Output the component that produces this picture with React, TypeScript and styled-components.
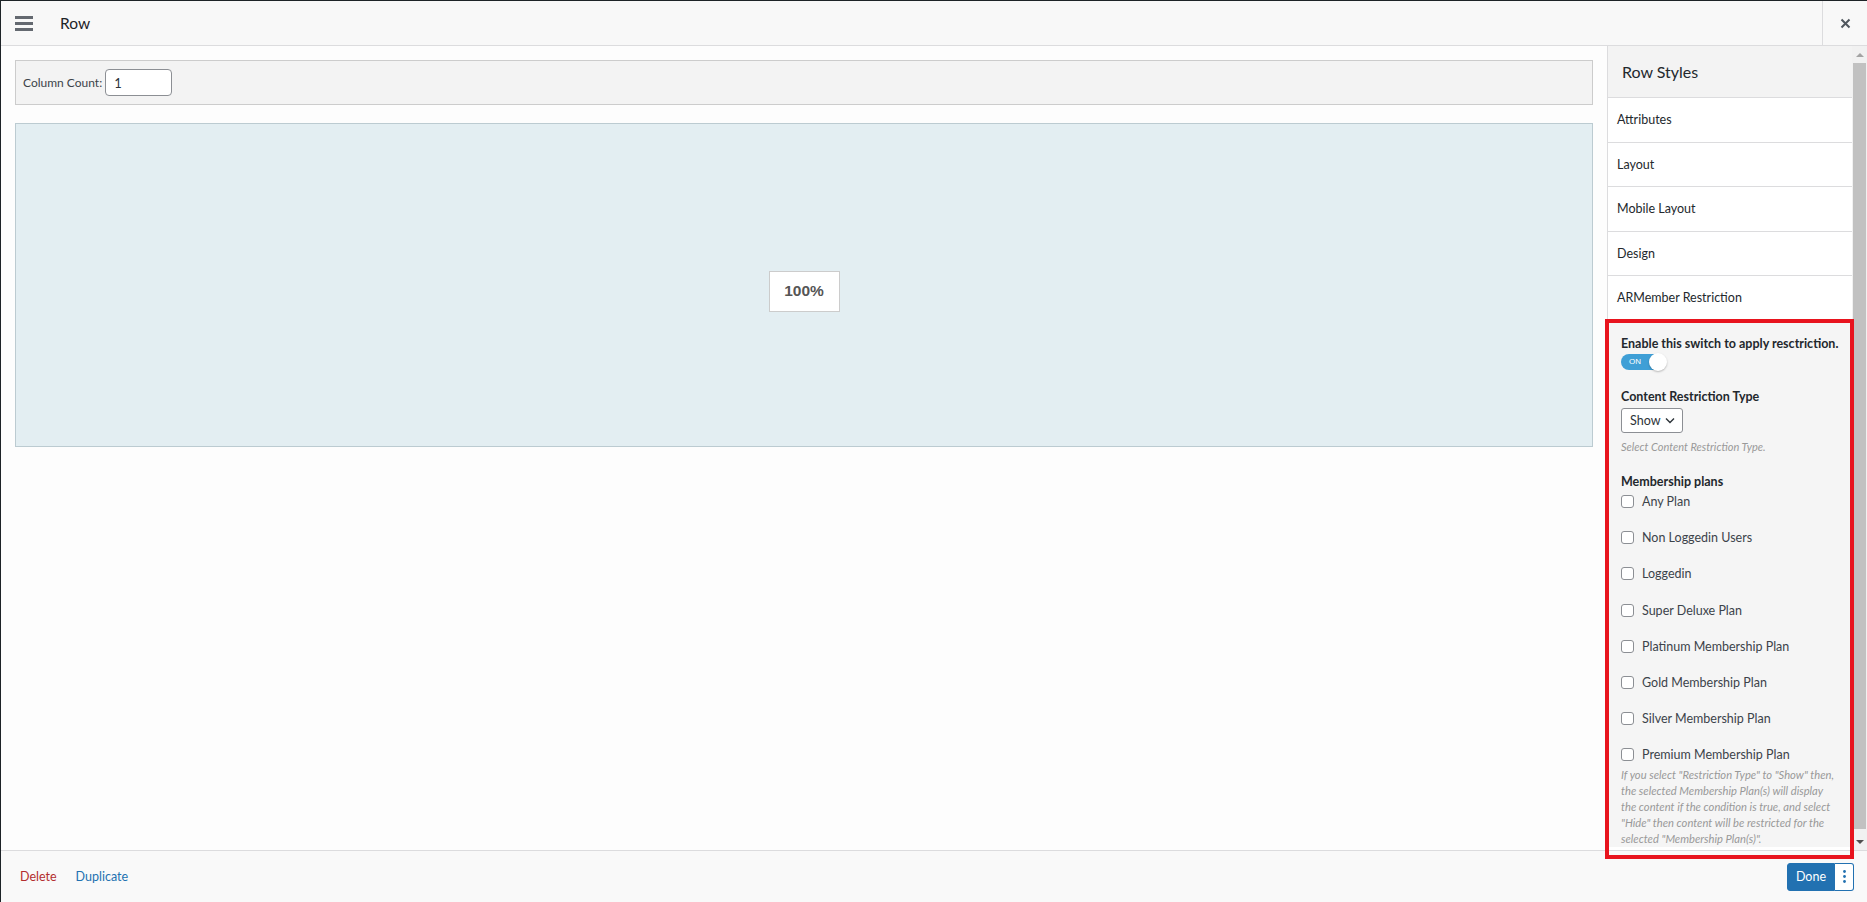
import styled, { createGlobalStyle } from "styled-components";

const GlobalStyle = createGlobalStyle`
  html, body {
    margin: 0;
    padding: 0;
    height: 100%;
    overflow: hidden;
    background: #fdfdfd;
  }
  #root {
    height: 100%;
  }
  * {
    box-sizing: border-box;
  }
`;

const PLANS = [
  "Any Plan",
  "Non Loggedin Users",
  "Loggedin",
  "Super Deluxe Plan",
  "Platinum Membership Plan",
  "Gold Membership Plan",
  "Silver Membership Plan",
  "Premium Membership Plan",
];

const TABS = ["Attributes", "Layout", "Mobile Layout", "Design", "ARMember Restriction"];

export default function App() {
  return (
    <Frame>
      <GlobalStyle />
      <Header>
        <MenuButton aria-label="menu">
          <span />
          <span />
          <span />
        </MenuButton>
        <Title>Row</Title>
        <CloseButton aria-label="close">
          <svg width="11" height="11" viewBox="0 0 11 11">
            <path d="M1.5 1.5 L9.5 9.5 M9.5 1.5 L1.5 9.5" stroke="#50575e" strokeWidth="2" />
          </svg>
        </CloseButton>
      </Header>

      <Body>
        <Main>
          <ColumnBar>
            <ColumnLabel>Column Count:</ColumnLabel>
            <CountInput defaultValue="1" />
          </ColumnBar>
          <Canvas>
            <ColumnChip>100%</ColumnChip>
          </Canvas>
        </Main>

        <Sidebar>
          <SideScroll>
            <SideHeader>Row Styles</SideHeader>
            {TABS.map((t) => (
              <TabItem key={t}>{t}</TabItem>
            ))}
            <Restriction>
              <FieldLabel>Enable this switch to apply resctriction.</FieldLabel>
              <Toggle>
                <ToggleText>ON</ToggleText>
                <Knob />
              </Toggle>

              <FieldLabel $gap={19}>Content Restriction Type</FieldLabel>
              <SelectBox>
                Show
                <svg width="10" height="7" viewBox="0 0 10 7">
                  <path d="M1 1.5 L5 5.5 L9 1.5" stroke="#2c3338" strokeWidth="1.4" fill="none" />
                </svg>
              </SelectBox>
              <Hint>Select Content Restriction Type.</Hint>

              <FieldLabel $gap={20}>Membership plans</FieldLabel>
              <PlanList>
                {PLANS.map((p) => (
                  <PlanRow key={p}>
                    <Check />
                    <span>{p}</span>
                  </PlanRow>
                ))}
              </PlanList>
              <HelpText>
                If you select "Restriction Type" to "Show" then, the selected Membership Plan(s) will
                display the content if the condition is true, and select "Hide" then content will be
                restricted for the selected "Membership Plan(s)".
              </HelpText>
            </Restriction>
          </SideScroll>
          <ScrollTrack>
            <ScrollArrow $up />
            <ScrollThumb />
            <ScrollArrow />
          </ScrollTrack>
        </Sidebar>
      </Body>

      <Footer>
        <FooterLink $danger>Delete</FooterLink>
        <FooterLink>Duplicate</FooterLink>
        <DoneGroup>
          <DoneButton>Done</DoneButton>
          <MoreButton aria-label="more">
            <svg width="3" height="13" viewBox="0 0 3 13">
              <circle cx="1.5" cy="1.5" r="1.4" fill="#2271b1" />
              <circle cx="1.5" cy="6.5" r="1.4" fill="#2271b1" />
              <circle cx="1.5" cy="11.5" r="1.4" fill="#2271b1" />
            </svg>
          </MoreButton>
        </DoneGroup>
      </Footer>

      <Highlight />
    </Frame>
  );
}

const font = `"Lato", "Noto Sans", sans-serif`;

const Frame = styled.div`
  position: relative;
  height: 100vh;
  width: 100vw;
  display: flex;
  flex-direction: column;
  border-top: 1px solid #1d2327;
  border-left: 1px solid #1d2327;
  font-family: ${font};
  color: #3c434a;
  background: #fdfdfd;
`;

const Header = styled.header`
  height: 45px;
  flex: none;
  display: flex;
  align-items: center;
  background: #f8f8f8;
  border-bottom: 1px solid #dcdcde;
`;

const MenuButton = styled.div`
  width: 59px;
  height: 44px;
  display: flex;
  flex-direction: column;
  justify-content: center;
  gap: 3px;
  padding-left: 14px;
  span {
    display: block;
    width: 18px;
    height: 3px;
    background: #646970;
  }
`;

const Title = styled.div`
  flex: 1;
  font-size: 15.5px;
  color: #1d2327;
`;

const CloseButton = styled.div`
  width: 45px;
  height: 44px;
  border-left: 1px solid #dcdcde;
  display: flex;
  align-items: center;
  justify-content: center;
`;

const Body = styled.div`
  flex: 1;
  min-height: 0;
  display: flex;
`;

const Main = styled.main`
  flex: 1;
  padding: 14px 14px 0 14px;
  background: #fdfdfd;
`;

const ColumnBar = styled.div`
  height: 45px;
  display: flex;
  align-items: center;
  gap: 3px;
  padding-left: 7px;
  background: #f3f3f3;
  border: 1px solid #ccc;
`;

const ColumnLabel = styled.span`
  font-size: 12px;
  color: #3c434a;
`;

const CountInput = styled.input`
  width: 67px;
  height: 27px;
  border: 1px solid #8c8f94;
  border-radius: 4px;
  padding: 0 8px;
  font-family: ${font};
  font-size: 13px;
  color: #2c3338;
  background: #fff;
  outline: none;
`;

const Canvas = styled.div`
  margin-top: 18px;
  height: 324px;
  background: #e3eef2;
  border: 1px solid #bccbd1;
  display: flex;
  align-items: center;
  justify-content: center;
  padding-top: 12px;
`;

const ColumnChip = styled.div`
  width: 71px;
  height: 41px;
  background: #fff;
  border: 1px solid #ccc;
  display: flex;
  align-items: center;
  justify-content: center;
  font-family: "Liberation Sans", Arial, sans-serif;
  font-weight: 700;
  font-size: 15.5px;
  color: #555;
`;

const Sidebar = styled.aside`
  width: 260px;
  flex: none;
  display: flex;
  border-left: 1px solid #dcdcde;
  background: #fff;
`;

const SideScroll = styled.div`
  flex: 1;
  overflow: hidden;
`;

const SideHeader = styled.div`
  height: 52px;
  display: flex;
  align-items: center;
  padding-left: 14px;
  background: #f3f3f3;
  border-bottom: 1px solid #dcdcde;
  font-size: 16px;
  color: #23282d;
`;

const TabItem = styled.div`
  height: 44.5px;
  display: flex;
  align-items: center;
  padding-left: 9px;
  border-bottom: 1px solid #dcdcde;
  font-size: 12.5px;
  color: #23282d;
  background: #fff;
`;

const Restriction = styled.section`
  background: #f5f5f5;
  padding: 15px 10px 0 13px;
`;

const FieldLabel = styled.div<{ $gap?: number }>`
  margin-top: ${(p) => p.$gap ?? 0}px;
  font-size: 12.5px;
  line-height: 16px;
  font-weight: 700;
  color: #23282d;
`;

const Toggle = styled.div`
  position: relative;
  margin-top: 2px;
  width: 45px;
  height: 16px;
  border-radius: 8px;
  background: #3f9fd6;
`;

const ToggleText = styled.span`
  position: absolute;
  left: 8px;
  top: 3px;
  font-size: 8px;
  line-height: 10px;
  color: #fff;
  font-family: "Liberation Sans", Arial, sans-serif;
`;

const Knob = styled.span`
  position: absolute;
  right: -1px;
  top: -1px;
  width: 18px;
  height: 18px;
  border-radius: 50%;
  background: #fff;
  box-shadow: 0 1px 2px rgba(0, 0, 0, 0.25);
`;

const SelectBox = styled.div`
  margin-top: 3px;
  width: 62px;
  height: 25px;
  border: 1px solid #8c8f94;
  border-radius: 3px;
  background: #fff;
  display: flex;
  align-items: center;
  gap: 5px;
  padding-left: 8px;
  font-size: 12.5px;
  color: #2c3338;
`;

const Hint = styled.div`
  margin-top: 7px;
  font-size: 11px;
  line-height: 14px;
  font-style: italic;
  color: #999;
`;

const PlanList = styled.div`
  margin-top: 2px;
  display: flex;
  flex-direction: column;
  gap: 16.2px;
`;

const PlanRow = styled.label`
  height: 20px;
  display: flex;
  align-items: center;
  gap: 8px;
  font-size: 12.5px;
  color: #3c434a;
`;

const Check = styled.span`
  width: 13px;
  height: 13px;
  border: 1px solid #8c8f94;
  border-radius: 3px;
  background: #fff;
  flex: none;
`;

const HelpText = styled.p`
  margin: 2px 0 0 0;
  max-width: 215px;
  font-size: 11.2px;
  line-height: 16px;
  font-style: italic;
  color: #999;
`;

const ScrollTrack = styled.div`
  width: 15px;
  flex: none;
  display: flex;
  flex-direction: column;
  align-items: center;
  background: #f1f1f1;
`;

const ScrollArrow = styled.div<{ $up?: boolean }>`
  height: 17px;
  width: 100%;
  display: flex;
  align-items: center;
  justify-content: center;
  &::after {
    content: "";
    border-left: 4px solid transparent;
    border-right: 4px solid transparent;
    ${(p) => (p.$up ? "border-bottom: 4px solid #a3a3a3;" : "border-top: 4px solid #505050;")}
  }
`;

const ScrollThumb = styled.div`
  flex: 1;
  width: 13px;
  background: #c1c1c1;
  margin-bottom: 4px;
`;

const Footer = styled.footer`
  height: 52px;
  flex: none;
  display: flex;
  align-items: center;
  gap: 19px;
  padding: 0 13px 0 19px;
  border-top: 1px solid #dcdcde;
  background: #f9f9f9;
`;

const FooterLink = styled.a<{ $danger?: boolean }>`
  font-size: 12.5px;
  color: ${(p) => (p.$danger ? "#b32d2e" : "#2271b1")};
  cursor: pointer;
`;

const DoneGroup = styled.div`
  margin-left: auto;
  display: flex;
  height: 28px;
`;

const DoneButton = styled.button`
  width: 48px;
  height: 28px;
  border: 1px solid #2271b1;
  border-radius: 3px 0 0 3px;
  background: #2271b1;
  color: #fff;
  font-family: ${font};
  font-size: 12.5px;
  padding: 0;
`;

const MoreButton = styled.button`
  width: 19px;
  height: 28px;
  border: 1px solid #2271b1;
  border-left: none;
  border-radius: 0 3px 3px 0;
  background: #fff;
  display: flex;
  align-items: center;
  justify-content: center;
  padding: 0;
`;

/* red annotation frame drawn over the restriction panel */
const Highlight = styled.div`
  position: absolute;
  left: 1604px;
  top: 318px;
  width: 249px;
  height: 540px;
  border: 4px solid #e8141e;
  pointer-events: none;
`;
